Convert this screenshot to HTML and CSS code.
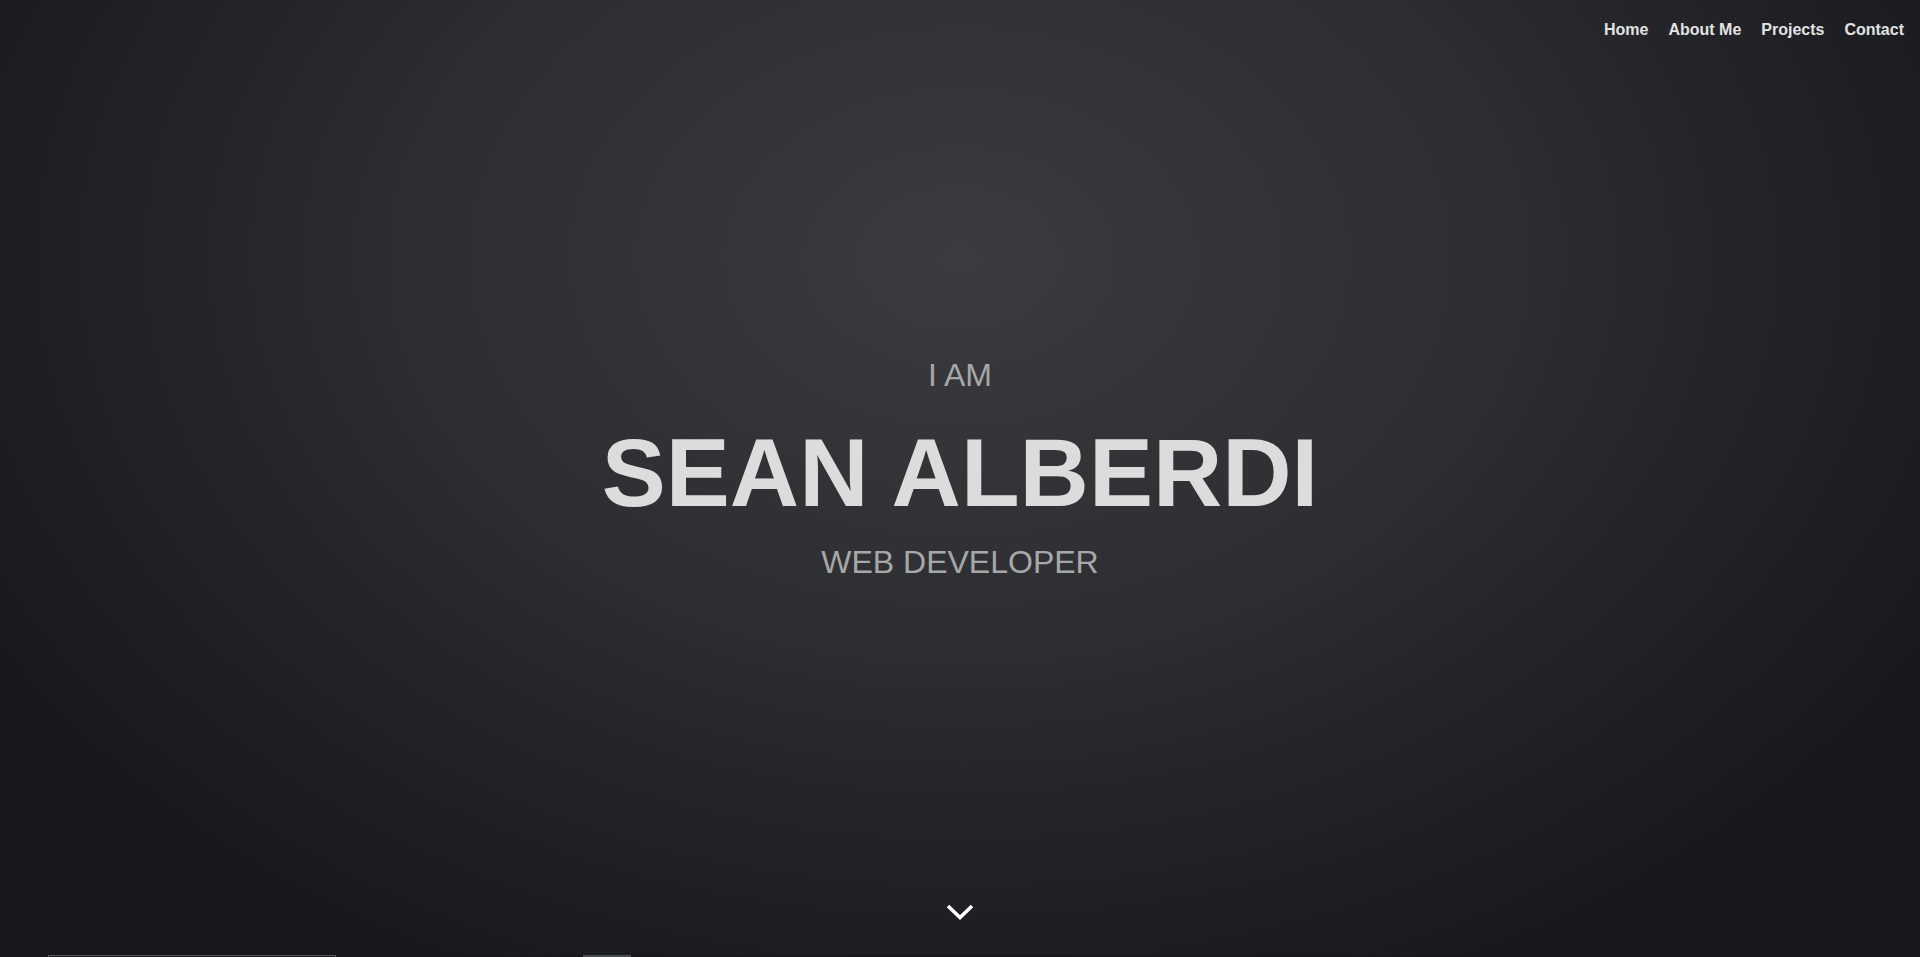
FILE: index.html
```html
<!DOCTYPE html>
<html lang="en">
<head>
<meta charset="utf-8">
<title>Sean Alberdi</title>
<link rel="stylesheet" href="styles.css">
</head>
<body>
<header class="hero">
  <nav class="nav">
    <a class="nav-link" href="#">Home</a>
    <a class="nav-link" href="#">About Me</a>
    <a class="nav-link" href="#">Projects</a>
    <a class="nav-link" href="#">Contact</a>
  </nav>
  <div class="intro">
    <p class="intro-pre">I AM</p>
    <h1 class="intro-name">SEAN ALBERDI</h1>
    <p class="intro-role">WEB DEVELOPER</p>
  </div>
  <a class="scroll-down" href="#">
    <svg class="chevron" width="28" height="16" viewBox="0 0 28 16">
      <polyline points="2,2 14,13.5 26,2" fill="none" stroke="#ffffff" stroke-width="3.6" stroke-linejoin="miter"/>
    </svg>
  </a>
</header>
<section class="next">
  <div class="next-box"></div>
  <div class="next-block"></div>
</section>
</body>
</html>
```

FILE: styles.css
```css
html, body {
  margin: 0;
  padding: 0;
  background: #17181c;
}

body {
  font-family: "Liberation Sans", Arial, sans-serif;
  overflow: hidden;
}

.hero {
  height: 955px;
  display: flex;
  flex-direction: column;
  align-items: center;
  background: radial-gradient(1150px 820px at 50% 27%, #3b3c40 0%, #333438 25%, #2d2e32 48%, #26272b 62%, #1e1f23 82%, #17181c 100%);
}

.nav {
  align-self: stretch;
  display: flex;
  justify-content: flex-end;
  gap: 20px;
  padding: 21px 16px 0 0;
  height: 18px;
}

.nav-link {
  color: #e2e2e2;
  font-size: 16px;
  font-weight: bold;
  line-height: 18px;
  text-decoration: none;
}

.intro {
  margin-top: 320px;
  display: flex;
  flex-direction: column;
  align-items: center;
}

.intro-pre {
  margin: 0;
  font-size: 32px;
  line-height: 32px;
  color: #a7a7a7;
}

.intro-name {
  margin: 34px 0 0;
  font-size: 96px;
  line-height: 96px;
  font-weight: bold;
  color: #dcdcdc;
}

.intro-role {
  margin: 25px 0 0;
  font-size: 32px;
  line-height: 32px;
  color: #a7a7a7;
}

.scroll-down {
  margin-top: 326px;
  display: block;
  width: 28px;
  height: 16px;
}

.chevron {
  display: block;
}

.next {
  height: 2px;
  overflow: hidden;
  display: flex;
  padding-left: 48px;
  background: #17181c;
}

.next-box {
  width: 286px;
  height: 40px;
  border: 1px solid #5a5a5c;
}

.next-block {
  margin-left: 247px;
  width: 48px;
  height: 40px;
  background: #4b4b4d;
}
```
